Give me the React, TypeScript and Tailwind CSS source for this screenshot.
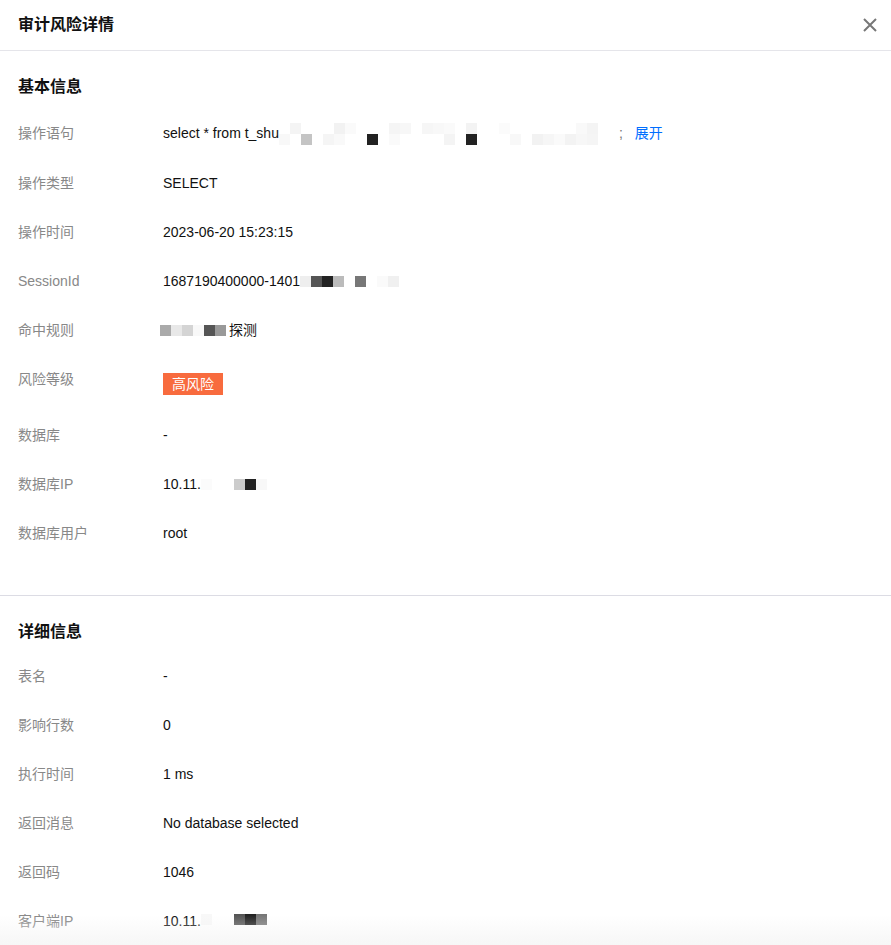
import { ReactNode } from "react";

const font = { fontFamily: '"Liberation Sans", "Noto Sans CJK SC", sans-serif' };

interface RowProps {
    label: string,
    children: ReactNode,
    extra?: string,
}

function Row({ label, children, extra }: RowProps) {
    return (
        <div className={"flex items-start mb-[29px] " + (extra ?? "")}>
            <div className="w-[145px] shrink-0 text-[#888888] leading-5">{label}</div>
            <div className="text-[#111111] leading-5 h-5 flex items-center">{children}</div>
        </div>
    );
}

// pixelated redaction blocks, one string of colours per row
function Mosaic({ rows, size, className }: { rows: string[][], size: number, className?: string }) {
    return (
        <span className={"inline-flex flex-col " + (className ?? "")}>
            {rows.map((r, i) => (
                <span key={i} className="flex">
                    {r.map((c, j) => (
                        <span key={j} style={{ width: size, height: size, background: c }} />
                    ))}
                </span>
            ))}
        </span>
    );
}

const W = "#ffffff";
const sqlMosaic = [
    [W, "#f4f4f4", W, W, W, "#f2f2f2", "#fafafa", W, W, W, "#f5f5f5", "#f7f7f7", W, "#f6f6f6", "#f8f8f8", "#fafafa", W, "#f3f3f3", W, W, "#fbfbfb", W, W, W, W, W, W, "#f9f9f9", "#f4f4f4", W],
    ["#f8f8f8", W, "#c4c4c4", W, "#f5f5f5", "#f9f9f9", W, W, "#222222", W, "#fafafa", W, W, W, W, "#f4f4f4", W, "#222222", W, W, W, "#f8f8f8", W, "#f2f2f2", "#f6f6f6", "#fafafa", "#f3f3f3", "#f7f7f7", "#f5f5f5", W],
];

export default function App() {
    return (
        <div className="relative w-[891px] min-h-[945px] bg-white text-sm overflow-hidden" style={font}>
            <div className="h-[51px] flex items-center justify-between pl-[18px] pr-[12px] border-b border-[#e5e5ea]">
                <h1 className="text-base font-bold text-[#111111] leading-6">审计风险详情</h1>
                <svg width="18" height="18" viewBox="0 0 18 18">
                    <path d="M3 3 L15 15 M15 3 L3 15" stroke="#777777" strokeWidth="2" />
                </svg>
            </div>

            <div className="pl-[18px] pt-[24px] pb-[23px] border-b border-[#dcdce4]">
                <h2 className="text-base font-bold text-[#111111] leading-6 mb-[24px]">基本信息</h2>
                <Row label="操作语句" extra="!mb-[30px]">
                    <span>select * from t_shu</span>
                    <Mosaic rows={sqlMosaic} size={11} className="mt-[1px] -mb-[1px]" />
                    <span className="ml-[10px] text-[#777777]">;</span>
                    <span className="ml-[12px] text-[#006eff]">展开</span>
                </Row>
                <Row label="操作类型">SELECT</Row>
                <Row label="操作时间">2023-06-20 15:23:15</Row>
                <Row label="SessionId">
                    <span>1687190400000-1401</span>
                    <Mosaic rows={[["#eeeeee", "#555555", "#222222", "#bbbbbb", W, "#777777", W, "#fafafa", "#f0f0f0"]]} size={11} />
                </Row>
                <Row label="命中规则">
                    <Mosaic rows={[["#aaaaaa", "#e8e8e8", "#d4d4d4", "#f8f8f8", "#555555", "#999999"]]} size={11} className="-ml-[3px] mr-[3px]" />
                    <span>探测</span>
                </Row>
                <div className="flex items-start mb-[30px]">
                    <div className="w-[145px] shrink-0 text-[#888888] leading-5">风险等级</div>
                    <div className="mt-[4px] h-[22px] px-[9px] bg-[#f86b3e] text-white flex items-center leading-5">高风险</div>
                </div>
                <Row label="数据库">-</Row>
                <Row label="数据库IP">
                    <span>10.11.</span>
                    <Mosaic rows={[["#fbfbfb", W, W, "#cccccc", "#222222", "#f8f8f8"]]} size={11} />
                </Row>
                <Row label="数据库用户">root</Row>
            </div>

            <div className="pl-[18px] pt-[24px]">
                <h2 className="text-base font-bold text-[#111111] leading-6 mb-[22px]">详细信息</h2>
                <Row label="表名">-</Row>
                <Row label="影响行数">0</Row>
                <Row label="执行时间">1 ms</Row>
                <Row label="返回消息">No database selected</Row>
                <Row label="返回码">1046</Row>
                <Row label="客户端IP">
                    <span>10.11.</span>
                    <Mosaic rows={[["#f8f8f8", W, W, "#555555", "#222222", "#777777"]]} size={11} className="-mt-[3px]" />
                </Row>
            </div>

            <div className="absolute left-0 right-0 bottom-0 h-[45px] bg-gradient-to-b from-transparent to-[#f2f2f2]" />
        </div>
    );
}
